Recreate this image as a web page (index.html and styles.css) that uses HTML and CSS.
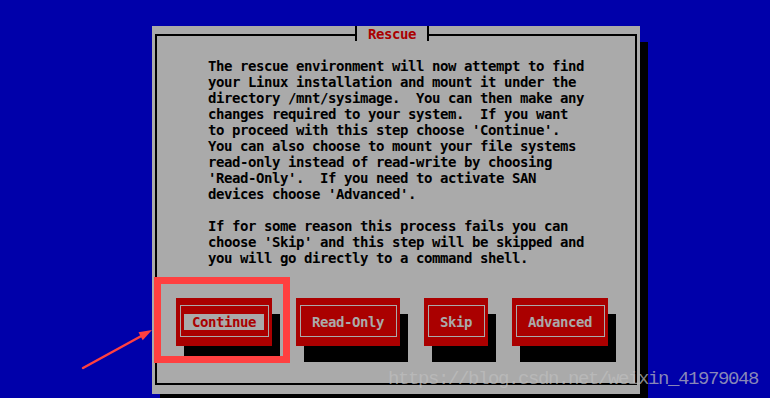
FILE: index.html
```html
<!doctype html>
<html lang="en">
  <head>
    <meta charset="UTF-8" />
    <meta name="viewport" content="width=device-width, initial-scale=1.0" />
    <title>Rescue</title>
    <link rel="stylesheet" href="styles.css">
  </head>
  <body>
    <div class="dialog">
      <div class="frame">
        <div class="title">Rescue</div>
        <div class="message">The rescue environment will now attempt to find
your Linux installation and mount it under the
directory /mnt/sysimage.  You can then make any
changes required to your system.  If you want
to proceed with this step choose 'Continue'.
You can also choose to mount your file systems
read-only instead of read-write by choosing
'Read-Only'.  If you need to activate SAN
devices choose 'Advanced'.

If for some reason this process fails you can
choose 'Skip' and this step will be skipped and
you will go directly to a command shell.</div>
        <div class="buttons">
          <div class="button focused"><div class="button-inner"><span class="label"> Continue </span></div></div>
          <div class="button"><div class="button-inner"><span class="label"> Read-Only </span></div></div>
          <div class="button"><div class="button-inner"><span class="label"> Skip </span></div></div>
          <div class="button"><div class="button-inner"><span class="label"> Advanced </span></div></div>
        </div>
      </div>
    </div>

    <!-- annotation drawn over the screenshot -->
    <div class="mark-box"></div>
    <svg class="arrow" width="770" height="398" viewBox="0 0 770 398">
      <line x1="83" y1="368" x2="145" y2="334" stroke="#ff4040" stroke-width="2.5" stroke-linecap="round" />
      <polygon points="152,330 138.5,332.3 142.7,340.2" fill="#ff4040" />
    </svg>
    <div class="watermark">https://blog.csdn.net/weixin_41979048</div>
  </body>
</html>
```

FILE: styles.css
```css
body {
  margin: 0;
  height: 398px;
  overflow: hidden;
  position: relative;
  background: #0000aa;
}
.dialog {
  margin: 26px 0 0 152px;
  width: 488px;
  height: 368px;
  box-sizing: border-box;
  padding: 8px 3px 9px 3px;
  background: #aaaaaa;
  box-shadow: 8px 16px 0 #000;
  font-family: "DejaVu Sans Mono", monospace;
  font-weight: bold;
  font-size: 14px;
  letter-spacing: -0.43px;
  line-height: 16px;
  color: #000;
}
.frame {
  position: relative;
  height: 100%;
  box-sizing: border-box;
  border: 2px solid #000;
}
.title {
  position: absolute;
  top: -10px;
  left: 198px;
  width: 70px;
  height: 15px;
  border-left: 2px solid #000;
  border-right: 2px solid #000;
  background: #aaaaaa;
  color: #aa0000;
  text-align: center;
  line-height: 16px;
}
.message {
  margin: 22px 0 0 51px;
  white-space: pre;
}
.buttons {
  display: flex;
  gap: 24px;
  margin: 32px 0 0 19px;
}
.button {
  padding: 7px 3px 9px 4px;
  background: #aa0000;
  box-shadow: 8px 16px 0 #000;
}
.button-inner {
  display: flex;
  justify-content: center;
  padding: 8px 4px 6px 3px;
  border: 1px solid #aaaaaa;
}
.label {
  white-space: pre;
  color: #aaaaaa;
}
.focused .label {
  background: #aaaaaa;
  color: #aa0000;
}
.mark-box {
  position: absolute;
  left: 154px;
  top: 277px;
  width: 122px;
  height: 72px;
  border: 7px solid #ff4040;
}
.arrow {
  position: absolute;
  left: 0;
  top: 0;
  pointer-events: none;
}
.watermark {
  position: absolute;
  left: 388px;
  top: 369px;
  font-family: "Liberation Mono", monospace;
  font-size: 19px;
  line-height: 20px;
  letter-spacing: -1.4px;
  color: rgba(190, 190, 190, 0.72);
  white-space: nowrap;
}
```
